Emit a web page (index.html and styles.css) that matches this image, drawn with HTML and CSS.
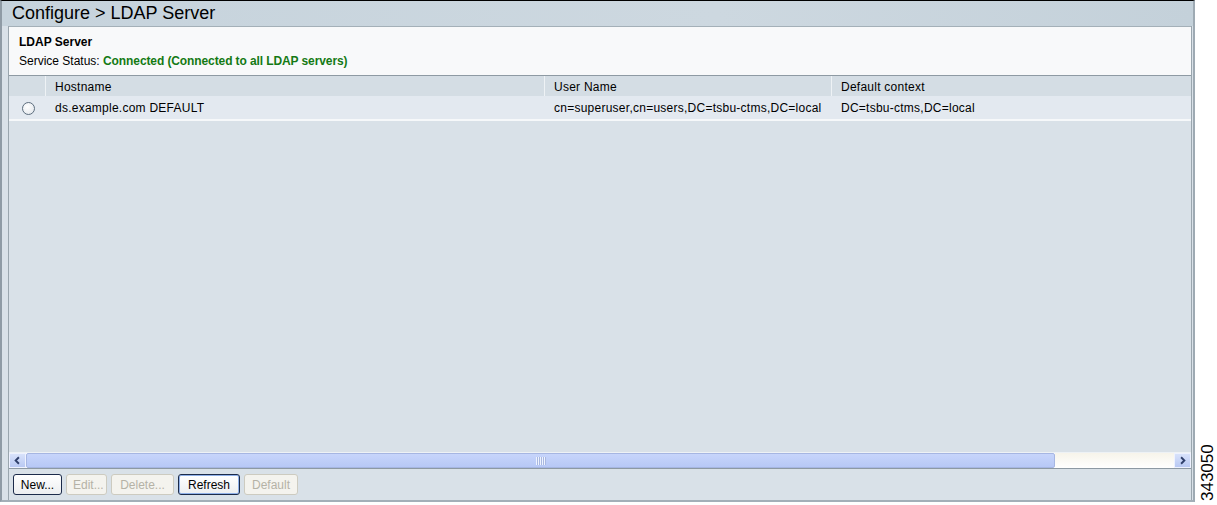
FILE: index.html
```html
<!DOCTYPE html>
<html>
<head>
<meta charset="utf-8">
<link rel="stylesheet" href="styles.css">
</head>
<body>
<div class="canvas">
  <div class="page">
    <div class="title">Configure &gt; LDAP Server</div>
    <div class="content">
      <div class="panel">
        <div class="panel-head">
          <div class="panel-title">LDAP Server</div>
          <div class="status">Service Status: <span class="ok">Connected (Connected to all LDAP servers)</span></div>
        </div>
        <div class="grid">
          <div class="hdr">
            <div class="c0"></div>
            <div class="c1">Hostname</div>
            <div class="c2">User Name</div>
            <div class="c3">Default context</div>
          </div>
          <div class="row">
            <div class="c0"><span class="radio"></span></div>
            <div class="c1">ds.example.com DEFAULT</div>
            <div class="c2">cn=superuser,cn=users,DC=tsbu-ctms,DC=local</div>
            <div class="c3">DC=tsbu-ctms,DC=local</div>
          </div>
          <div class="empty"></div>
        </div>
        <div class="hscroll">
          <div class="sbtn"><svg width="16" height="15" viewBox="0 0 16 15"><path d="M9.5 4 L6 7.5 L9.5 11" fill="none" stroke="#2f3f6a" stroke-width="2"/></svg></div>
          <div class="thumb"><span class="grip"></span></div>
          <div class="track"></div>
          <div class="sbtn"><svg width="16" height="15" viewBox="0 0 16 15"><path d="M6.5 4 L10 7.5 L6.5 11" fill="none" stroke="#2f3f6a" stroke-width="2"/></svg></div>
        </div>
        <div class="buttons">
          <button class="btn">New...</button>
          <button class="btn dis">Edit...</button>
          <button class="btn dis">Delete...</button>
          <button class="btn focus">Refresh</button>
          <button class="btn dis">Default</button>
        </div>
      </div>
    </div>
  </div>
  <div class="figno">343050</div>
</div>
</body>
</html>
```
FILE: styles.css
```css
* { box-sizing: border-box; }
html, body { margin: 0; padding: 0; background: #ffffff; }
body { font-family: "Liberation Sans", Arial, sans-serif; font-size: 12px; color: #000; }
.canvas { position: relative; width: 1217px; height: 505px; }
.page {
  width: 1195px; height: 502px;
  border-top: 1px solid #000;
  border-left: 2px solid #8f9ba5;
  border-right: 2px solid #9eaab3;
  border-bottom: 2px solid #a3afb8;
  background: #d9e1e8;
  display: flex; flex-direction: column;
}
.title {
  height: 25px; flex: none;
  padding: 1px 0 0 10px;
  font-size: 18px; line-height: 22px;
  background: linear-gradient(to right, #c6d3dc, #cdd8e0 60%, #c4d1da);
}
.content { flex: 1; display: flex; padding: 0 1px 0 6px; }
.panel { flex: 1; display: flex; flex-direction: column; border-left: 1px solid #9aa6ae; border-right: 1px solid #9aa6ae; }
.panel-head {
  height: 50px; flex: none;
  background: #f8f9fa;
  border-top: 1px solid #a4b0b8;
  border-bottom: 1px solid #8e9aa3;
  padding: 8px 0 0 10px;
}
.panel-title { font-weight: bold; line-height: 14px; }
.status { margin-top: 5px; line-height: 14px; }
.ok { color: #147a14; font-weight: bold; letter-spacing: -0.1px; }
.grid { flex: 1; display: flex; flex-direction: column; }
.hdr, .row { display: grid; grid-template-columns: 36px 499px 287px 1fr; letter-spacing: 0.25px; }
.hdr { height: 20px; background: #d4dde4; line-height: 22px; }
.hdr > div + div { border-left: 1px solid #eef2f5; padding-left: 9px; }
.row { height: 25px; background: #e3e9f0; border-bottom: 2px solid #f6f8fa; line-height: 24px; }
.row > div + div { padding-left: 10px; }
.row .c0 { display: flex; align-items: center; justify-content: center; padding-top: 1px; padding-left: 2px; }
.radio {
  width: 13px; height: 13px; border-radius: 50%;
  border: 1px solid #5d6e7e;
  background: radial-gradient(circle at 40% 35%, #ffffff, #dfe4ea);
}
.empty { flex: 1; }
.hscroll {
  height: 17px; flex: none;
  display: flex; align-items: stretch;
  border-top: 1px solid #eef2f5;
  border-bottom: 1px solid #8d99a3;
  background: #fff;
}
.sbtn {
  width: 17px; flex: none;
  background: linear-gradient(#d8e2fb, #b9c9f3);
  border: 1px solid #eef2ff;
  display: flex; align-items: center; justify-content: center;
}
.thumb {
  width: 1029px; flex: none;
  background: linear-gradient(#c7d5fb, #b7c8f6);
  border: 1px solid #a6b6e2;
  border-radius: 2px;
  display: flex; align-items: center; justify-content: center;
}
.grip { width: 10px; height: 8px; background: repeating-linear-gradient(to right, #eef3ff 0 1px, #a9b8e0 1px 2px); }
.track { flex: 1; background: linear-gradient(#f7f4ea, #ffffff); }
.buttons { height: 31px; flex: none; display: flex; gap: 4px; padding: 5px 0 0 4px; }
.btn {
  height: 21px; padding: 0 6px;
  font-family: "Liberation Sans", Arial, sans-serif; font-size: 12px;
  color: #000;
  border: 1px solid #1c2b4a; border-radius: 3px;
  background: linear-gradient(#ffffff, #eceef0);
}
.btn.dis { color: #b5b2a6; border-color: #cdcbc0; background: #f4f3ee; }
.btn.focus { border-color: #1c2b4a; box-shadow: inset 0 0 0 1px #8fb0e8; padding: 0 9px; }
.btn:nth-child(1) { width: 49px; }
.btn:nth-child(2) { width: 41px; }
.btn:nth-child(3) { width: 63px; }
.btn:nth-child(4) { width: 62px; }
.btn:nth-child(5) { width: 54px; }
.figno {
  position: absolute; left: 1199px; top: 441px;
  width: 60px; height: 18px;
  transform-origin: 0 0; transform: translate(0, 60px) rotate(-90deg);
  font-size: 17px; line-height: 18px; letter-spacing: 0px;
}
```
